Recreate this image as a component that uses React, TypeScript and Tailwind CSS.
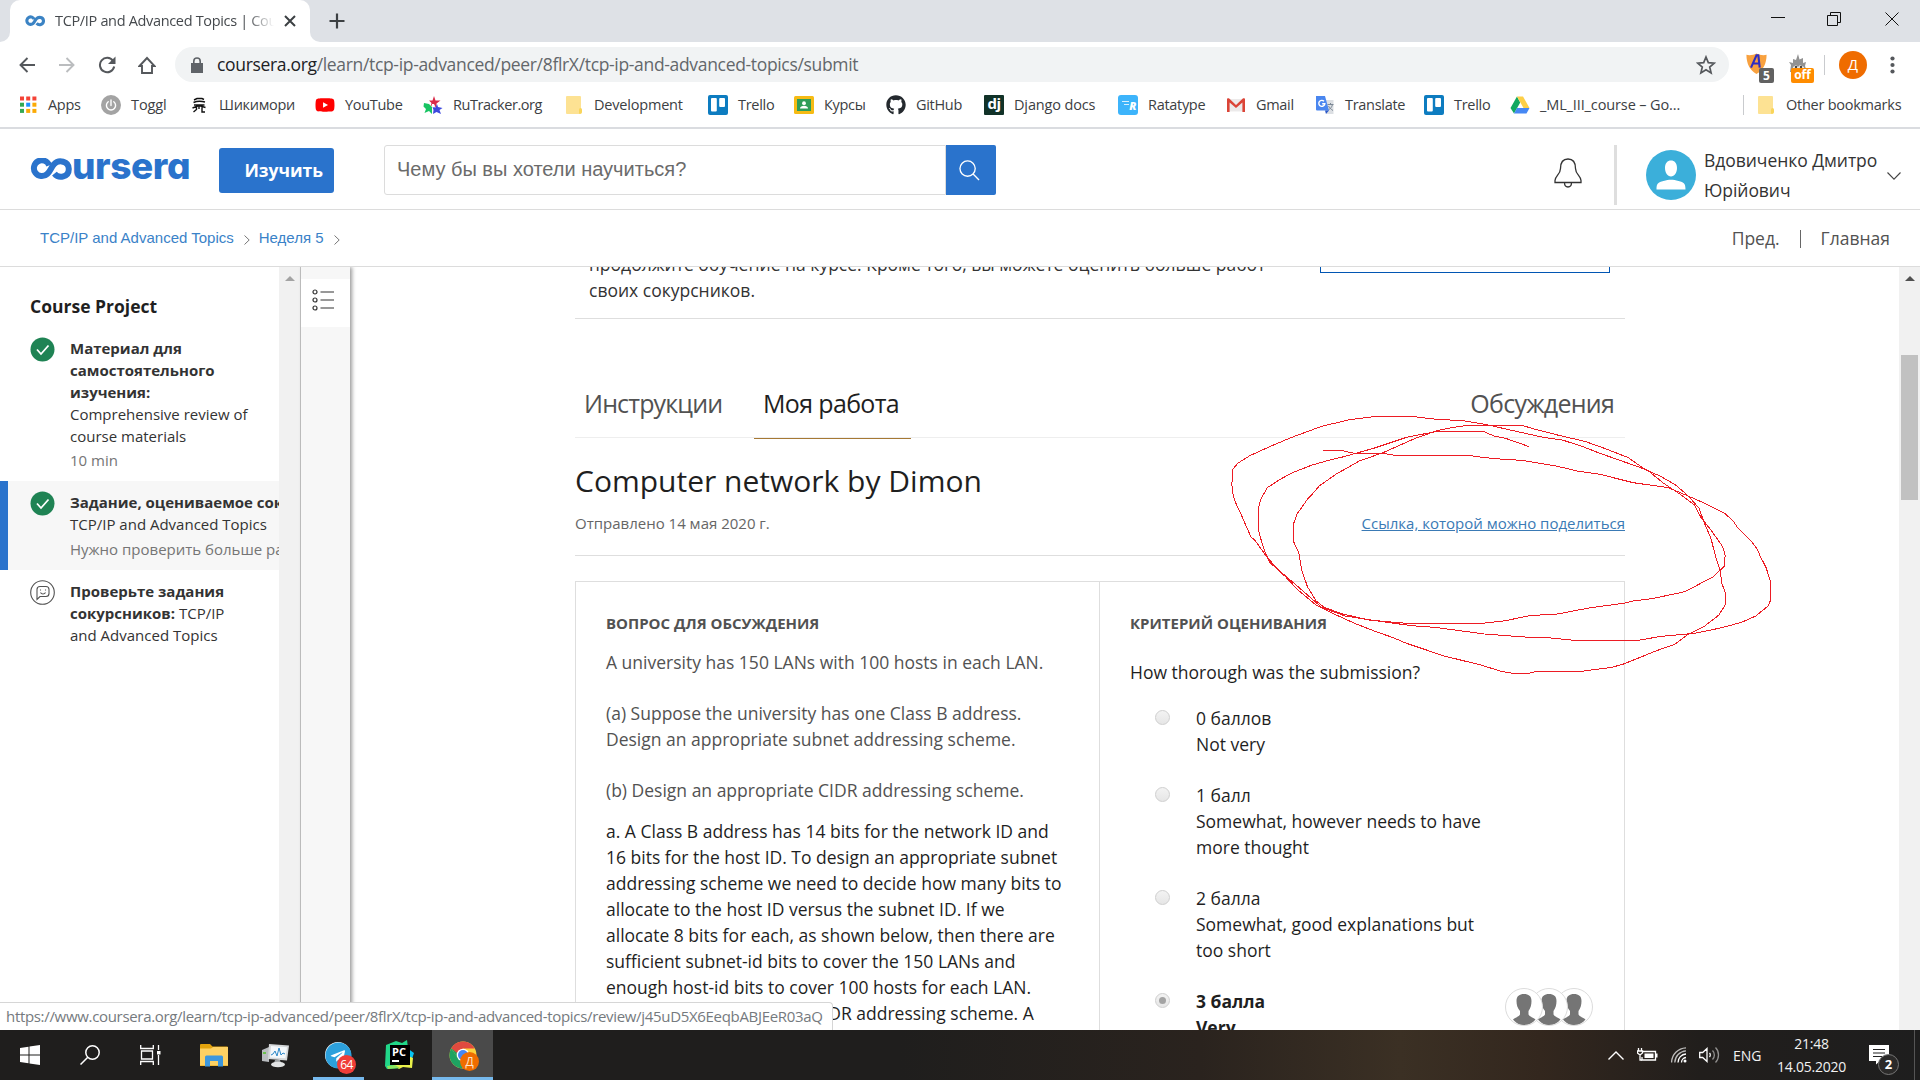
import type { ReactNode } from 'react'
import { FaGithub, FaTelegram, FaYoutube } from 'react-icons/fa'

/* ---------- icons ---------- */

function CourseraMark({ className, width }: { className: string; width: number }) {
  return (
    <svg viewBox="0 0 42 22" className={className} fill="none" stroke="currentColor" strokeWidth={width}>
      <path d="M19.2 7.4A7.9 7.9 0 1 0 17.2 16C20.4 13 21.2 9.4 24 6.2C28.6 1.2 38.8 3 38.8 11C38.8 19 29 21.2 24.4 15.6" />
    </svg>
  )
}

function AppsIcon() {
  const colors = ['#f44336', '#f44336', '#f44336', '#34a853', '#1e90ff', '#fbaa05', '#34a853', '#fbaa05', '#fbaa05']
  return (
    <svg viewBox="0 0 20 20" className="size-5">
      {colors.map((c, i) => (
        <rect key={i} x={2 + (i % 3) * 6.2} y={1.5 + Math.floor(i / 3) * 6.2} width="4" height="4" fill={c} />
      ))}
    </svg>
  )
}

function TogglIcon() {
  return (
    <svg viewBox="0 0 20 20" className="size-5" fill="none">
      <circle cx="10" cy="10" r="10" fill="#a3a3a3" />
      <path d="M10 5v5.5M7.2 6.8a4.6 4.6 0 1 0 5.6 0" stroke="#fff" strokeWidth="1.4" strokeLinecap="round" />
    </svg>
  )
}

function ShikimoriIcon() {
  return (
    <svg viewBox="0 0 20 20" className="size-5" fill="none" stroke="#111" strokeWidth="1.4">
      <path d="M5 5L8 3.500h5l2 1M4.500 7.500C8 6 12 6 16 7M5 10h10.500M3.500 13l6.500-2.500 6.500 2M7.500 12v2.500l-3 2.500M13 12v5h3M10 10v4" />
    </svg>
  )
}

function RuTrackerIcon() {
  return (
    <svg viewBox="0 0 20 20" className="size-5" strokeLinejoin="round" strokeWidth="2">
      <path d="M11 1l1.500 4.500h5l-4 3 0 4-3-2-3 1 1-3.500-2.500-2.500h3.500z" fill="#d92b4a" />
      <path d="M1 8l5 1 3 3 0 7-3-3-4.500 2 1.500-4-2.500-2.500z" fill="#19c463" />
      <path d="M14 9l1 3 4.500 1-3 2 1.500 4-4.500-2-3.500 2 .500-4-1-3 3 .500z" fill="#3d49de" />
      <path d="M9 9l2 0 1 2-2 1.500-1.500-1.500z" fill="#fff" />
    </svg>
  )
}

function FolderIcon() {
  return (
    <svg viewBox="0 0 20 20" className="size-5">
      <path d="M3 1h13a1 1 0 0 1 1 1v12h.5v4a1 1 0 0 1-1 1H3a1 1 0 0 1-1-1V2a1 1 0 0 1 1-1z" fill="#fde293" />
      <path d="M15 14.500a1.500 1.500 0 0 1 3 0V17a2 2 0 0 1-3 1.500z" fill="#f9d55b" />
    </svg>
  )
}

function TrelloIcon() {
  return (
    <svg viewBox="0 0 20 20" className="size-5">
      <rect width="20" height="20" rx="2" fill="#0d7cc0" />
      <rect x="3" y="3" width="5.800" height="13.500" rx="1" fill="#fff" />
      <rect x="11.200" y="3" width="5.800" height="9" rx="1" fill="#fff" />
    </svg>
  )
}

function ClassroomIcon() {
  return (
    <svg viewBox="0 0 20 20" className="size-5">
      <rect y="1" width="20" height="18" rx="1.500" fill="#f6bb14" />
      <rect x="3" y="4" width="14" height="12" fill="#2f9d58" />
      <circle cx="10" cy="8.200" r="1.900" fill="#fff" />
      <path d="M6 13.500c0-3.600 8-3.600 8 0z" fill="#fff" />
    </svg>
  )
}

function DjangoIcon() {
  return (
    <span className="flex size-5 items-center justify-center rounded-[1px] bg-[#113228] pb-[3px] text-[15px] leading-none font-bold tracking-[-0.5px] text-white">
      dj
    </span>
  )
}

function RatatypeIcon() {
  return (
    <span className="flex size-5 items-center justify-end rounded-[3px] bg-[#3db4fb] pr-[2px] text-[11px] leading-none font-extrabold text-white italic">
      <span className="mb-1 flex flex-col items-end gap-[2px]">
        <i className="h-px w-[7px] bg-white/80" />
        <i className="h-px w-[5px] bg-white/80" />
      </span>
      R
    </span>
  )
}

function GmailIcon() {
  return (
    <svg viewBox="0 0 20 20" className="size-5">
      <path d="M2 4h16v12.500H2z" fill="#eceaea" />
      <path d="M1 4.200C1 3.200 2.400 2.800 3.200 3.600L10 10l6.800-6.400C17.600 2.800 19 3.200 19 4.200V17h-2.600V7.500L10 13 3.600 7.500V17H1z" fill="#db4437" />
    </svg>
  )
}

function TranslateIcon() {
  return (
    <svg viewBox="0 0 20 20" className="size-5">
      <path d="M8 5h10.500v14H12z" fill="#dcdfe3" />
      <path d="M12.500 9.500h6M15.500 8v1.500M17.500 9.500c-.5 2.500-2.500 4.500-4 5.500M13.500 11c1 2 3 3.500 4.500 4.500" stroke="#7b8794" fill="none" />
      <path d="M1 1h9l4 14.500H2a1 1 0 0 1-1-1z" fill="#4a86ef" />
      <path d="M10 15.500h4l-3 3.500z" fill="#2a56c6" />
      <path d="M9 6.300A3 3 0 1 0 9.800 8.800H7.200" stroke="#fff" strokeWidth="1.400" fill="none" />
    </svg>
  )
}

function DriveIcon() {
  return (
    <svg viewBox="0 0 20 20" className="size-5">
      <path d="M7 1.500L.500 13 4 18.500 10.200 7.500z" fill="#11a860" />
      <path d="M7 1.500h6L19.500 13h-6z" fill="#fdcf48" />
      <path d="M7 13h12.500L16.500 18.500H4z" fill="#4688f4" />
    </svg>
  )
}

function PersonBust() {
  return (
    <span className="flex size-[38px] items-end justify-center overflow-hidden rounded-full border border-[#dcdcdc] bg-white">
      <svg viewBox="0 0 36 36" className="size-9" fill="#757575">
        <path d="M10.500 12C10.500 7 13.500 5 18 5s7.500 2 7.500 7c0 4-1 7-3 10v3.500c1.500 2.500 5 3 7 5C27 34 23 36 18 36S10 34 7 30.500c2-2 5.500-2.500 7-5V22c-2.500-3-3.500-6-3.500-10z" />
      </svg>
    </span>
  )
}

/* ---------- browser chrome ---------- */

function TabStrip() {
  return (
    <div className="flex h-[42px] shrink-0 items-stretch justify-between bg-[#dee1e6]">
      <div className="flex items-stretch">
        <div className="w-[10px] bg-white">
          <div className="size-full rounded-br-[10px] bg-[#dee1e6]" />
        </div>
        <div className="flex w-[300px] items-center rounded-t-[10px] bg-white pl-[15px]">
          <CourseraMark className="h-[12px] w-[20px] text-[#3b83c4]" width={6.5} />
          <div className="ml-[10px] w-[220px] overflow-hidden text-[14.5px] tracking-[-0.33px] whitespace-nowrap text-[#45494d] [mask-image:linear-gradient(to_right,black_192px,transparent_219px)]">
            TCP/IP and Advanced Topics | Cour
          </div>
          <svg viewBox="0 0 12 12" className="ml-[9px] size-3" stroke="#3c4043" strokeWidth="2">
            <path d="M1 1l10 10M11 1L1 11" />
          </svg>
        </div>
        <div className="w-[10px] bg-white">
          <div className="size-full rounded-bl-[10px] bg-[#dee1e6]" />
        </div>
        <svg viewBox="0 0 16 16" className="ml-[9px] size-4 self-center" stroke="#3c4043" strokeWidth="2.2">
          <path d="M8 .5v15M.5 8h15" />
        </svg>
      </div>
      <div className="flex items-start pt-[12px]">
        <svg viewBox="0 0 14 14" className="mr-[42px] size-[14px]" stroke="#111">
          <path d="M0 5.500h14" />
        </svg>
        <svg viewBox="0 0 14 14" className="mr-[44px] size-[14px]" fill="none" stroke="#111">
          <path d="M.5 3.500h10v10h-10zM3.500 3.500v-3h10v10h-3" />
        </svg>
        <svg viewBox="0 0 14 14" className="mr-[21px] size-[14px]" stroke="#111">
          <path d="M.5 .5l13 13M13.500 .5l-13 13" />
        </svg>
      </div>
    </div>
  )
}

function Toolbar() {
  return (
    <div className="flex h-[45px] shrink-0 items-center bg-white">
      <svg viewBox="0 0 16 16" className="ml-[19px] size-4" fill="none" stroke="#55585c" strokeWidth="1.900">
        <path d="M16 8H1.500M8.500 1L1.500 8l7 7" />
      </svg>
      <svg viewBox="0 0 16 16" className="ml-[24px] size-4" fill="none" stroke="#bbbdbf" strokeWidth="1.900">
        <path d="M0 8h14.500M7.500 1l7 7-7 7" />
      </svg>
      <svg viewBox="0 0 18 18" className="ml-[23px] size-[18px]" fill="none" stroke="#55585c" strokeWidth="2">
        <path d="M15 4.800A7.200 7.200 0 1 0 16.200 10.500" />
        <path d="M17.500 .5v7.500H10z" fill="#55585c" stroke="none" />
      </svg>
      <svg viewBox="0 0 18 18" className="ml-[22px] size-[18px]" fill="none" stroke="#55585c" strokeWidth="1.900">
        <path d="M1.500 10L9 2l7.500 8H14v7H4v-7z" />
      </svg>
      <div className="ml-[19px] flex h-[35px] w-[1554px] items-center rounded-full bg-[#f1f3f4] pr-[13px] pl-[16px]">
        <svg viewBox="0 0 12 16" className="h-4 w-[12px]">
          <path d="M0 6h12v10H0z" fill="#5f6368" />
          <path d="M2.800 6.500V4.200a3.200 3.200 0 0 1 6.400 0v2.300" fill="none" stroke="#5f6368" strokeWidth="1.600" />
        </svg>
        <div className="ml-[14px] flex-1 text-[17.5px] tracking-[-0.33px] text-[#63676b]">
          <span className="text-[#202124]">coursera.org</span>/learn/tcp-ip-advanced/peer/8flrX/tcp-ip-and-advanced-topics/submit
        </div>
        <svg viewBox="0 0 20 20" className="size-5" fill="none" stroke="#55585c" strokeWidth="1.700">
          <path d="M10 2l2.300 5.600 6 .5-4.600 3.900 1.400 5.900L10 14.700 4.900 17.900l1.400-5.900L1.700 8.100l6-.5z" />
        </svg>
      </div>
      <div className="relative ml-[17px] h-[28px] w-[28px]">
        <svg viewBox="0 0 22 24" className="mt-[2px] h-[22px] w-[21px]">
          <path d="M0 2c4 1 8 0 11-1.500C14 2 18 3 22 2c0 10-4 17-11 21C4 19 0 12 0 2z" fill="#f8a13f" />
          <path d="M5 16L11 2.500h2L14.500 16M7.500 11.500h7" fill="none" stroke="#2c2cc4" strokeWidth="2.300" />
        </svg>
        <span className="absolute right-0 bottom-[-4px] h-[15px] w-[15px] rounded-[2px] bg-[#616161] text-center text-[12px] leading-[15px] font-bold text-white">5</span>
      </div>
      <div className="relative ml-[14px] h-[28px] w-[26px]">
        <svg viewBox="0 0 20 20" className="mt-[2px] size-5">
          <path d="M2 19L3 12 1 9l4 1L5 6l3 1 2-6 1.500 5.500L15 5l0 5 3-1-1 4L19 19z" fill="#929292" />
          <path d="M5 14l3-2 2 2 2-2 4 2v3H5z" fill="#e8e8e8" />
          <circle cx="8" cy="14" r="1.200" fill="#444" />
          <circle cx="13" cy="14" r="1.200" fill="#444" />
        </svg>
        <span className="absolute right-0 bottom-[-4px] h-[15px] w-[23px] rounded-[2px] bg-[#ff8c00] text-center text-[12px] leading-[14px] font-bold text-white">off</span>
      </div>
      <div className="ml-[10px] h-[20px] w-px bg-[#c9cbce]" />
      <div className="ml-[14px] flex size-[28px] items-center justify-center rounded-full bg-[#ef6c00] pb-px text-[15px] text-white">Д</div>
      <svg viewBox="0 0 5 20" className="ml-[23px] h-5 w-[5px]" fill="#55585c">
        <circle cx="2.500" cy="3.500" r="2.100" />
        <circle cx="2.500" cy="10" r="2.100" />
        <circle cx="2.500" cy="16.500" r="2.100" />
      </svg>
    </div>
  )
}

const bookmarks: { label: string; icon: ReactNode; width: string }[] = [
  { label: 'Apps', icon: <AppsIcon />, width: 'w-[83px]' },
  { label: 'Toggl', icon: <TogglIcon />, width: 'w-[88px] tracking-[-0.1px]' },
  { label: 'Шикимори', icon: <ShikimoriIcon />, width: 'w-[126px]' },
  { label: 'YouTube', icon: <FaYoutube className="size-5 text-[#f00]" />, width: 'w-[108px]' },
  { label: 'RuTracker.org', icon: <RuTrackerIcon />, width: 'w-[141px] tracking-[-0.45px]' },
  { label: 'Development', icon: <FolderIcon />, width: 'w-[144px] tracking-[-0.2px]' },
  { label: 'Trello', icon: <TrelloIcon />, width: 'w-[86px]' },
  { label: 'Курсы', icon: <ClassroomIcon />, width: 'w-[92px]' },
  { label: 'GitHub', icon: <FaGithub className="size-5 text-[#24292e]" />, width: 'w-[98px]' },
  { label: 'Django docs', icon: <DjangoIcon />, width: 'w-[134px] tracking-[-0.15px]' },
  { label: 'Ratatype', icon: <RatatypeIcon />, width: 'w-[108px]' },
  { label: 'Gmail', icon: <GmailIcon />, width: 'w-[89px]' },
  { label: 'Translate', icon: <TranslateIcon />, width: 'w-[109px]' },
  { label: 'Trello', icon: <TrelloIcon />, width: 'w-[86px]' },
  { label: '_ML_III_course – Go...', icon: <DriveIcon />, width: 'w-[233px] tracking-[-0.12px]' },
]

function BookmarksBar() {
  return (
    <div className="flex h-[42px] shrink-0 items-center border-b-2 border-[#dadce0] bg-white pb-[4px] pl-[18px] text-[14.5px] tracking-[-0.3px] text-[#3c4043]">
      {bookmarks.map((b, i) => (
        <div key={i} className={`flex shrink-0 items-center gap-[10px] whitespace-nowrap ${b.width}`}>
          {b.icon}
          {b.label}
        </div>
      ))}
      <div className="h-5 w-px bg-[#c9cbce]" />
      <div className="ml-[12px] flex items-center gap-[10px] tracking-[-0.25px] whitespace-nowrap">
        <FolderIcon />
        Other bookmarks
      </div>
    </div>
  )
}

/* ---------- site header ---------- */

function SiteHeader() {
  return (
    <header className="flex h-[81px] shrink-0 items-start border-b border-[#dcdcdc] bg-white">
      <div className="mt-[29px] ml-[30px] flex h-[22px] w-[160px] items-center text-[#2a73cc]">
        <CourseraMark className="h-[22px] w-[42px] shrink-0" width={6} />
        <span className="pb-[7px] font-['Inter',sans-serif] text-[37px] leading-[22px] font-extrabold tracking-[-0.4px] [font-feature-settings:'cv11']">ursera</span>
      </div>
      <button className="mt-[19px] ml-[29px] h-[45px] w-[115px] rounded-[3px] bg-[#2a73cc] pr-[11px] text-right text-[17.5px] font-bold text-white">
        Изучить
      </button>
      <div className="mt-[16px] ml-[50px] flex h-[50px] w-[612px]">
        <div className="flex-1 rounded-l-[3px] border border-[#dcdcdc] pl-[12px] font-['Liberation_Sans',sans-serif] text-[20px] leading-[46px] text-[#6b6b6b]">
          Чему бы вы хотели научиться?
        </div>
        <div className="flex w-[50px] items-center justify-center rounded-r-[2px] bg-[#2a73cc]">
          <svg viewBox="0 0 22 22" className="mr-[4px] size-[21px]" fill="none" stroke="#fff" strokeWidth="1.400">
            <circle cx="9" cy="9" r="8" />
            <path d="M14.500 14.500L21 21" />
          </svg>
        </div>
      </div>
      <svg viewBox="0 0 28 30" className="mt-[29px] ml-auto h-[30px] w-[28px]" fill="none" stroke="#333" strokeWidth="1.300">
        <path d="M6.500 10.500C6.500 4.500 9 1 14 1s7.500 3.500 7.500 9.500c0 6 5.500 7.500 5.500 12v2H1v-2c0-4.500 5.500-6 5.500-12zM10.500 24.500c0 6 7 6 7 0" />
      </svg>
      <div className="mt-[16px] ml-[32px] h-[60px] w-[3px] bg-[#dedede]" />
      <div className="mt-[21px] ml-[29px] size-[50px] overflow-hidden rounded-full bg-[#3bafda]">
        <svg viewBox="0 0 50 50" fill="#fff">
          <path d="M19 18c0-5 2.500-7.500 6-7.500s6 2.500 6 7.500c0 4.500-2.500 8.500-6 8.500s-6-4-6-8.500zM10.500 39.500c0-6 1.500-7 7-8.500 5.500-1.800 9.500-1.800 15 0 5.500 1.500 7 2.500 7 8.500z" />
        </svg>
      </div>
      <div className="mt-[16px] ml-[8px] w-[183px] text-[17.5px] leading-[30px] tracking-[-0.05px] text-[#333]">
        Вдовиченко Дмитро
        <br />
        Юрійович
      </div>
      <svg viewBox="0 0 14 8" className="mt-[43px] mr-[19px] h-[8px] w-[14px]" fill="none" stroke="#444" strokeWidth="1.100">
        <path d="M.5 .5L7 7.200 13.500 .5" />
      </svg>
    </header>
  )
}

function Caret({ className }: { className: string }) {
  return (
    <svg viewBox="0 0 6 10" className={`h-[10px] w-[6px] ${className}`} fill="none" stroke="#777">
      <path d="M.5 .5L5.200 5 .5 9.500" />
    </svg>
  )
}

function BreadcrumbBar() {
  return (
    <nav className="flex h-[57px] shrink-0 items-center border-b border-[#dcdcdc] bg-white pl-[40px]">
      <div className="flex items-center font-['Liberation_Sans',sans-serif] text-[15px] text-[#3a82c8]">
        TCP/IP and Advanced Topics
        <Caret className="mt-[3px] mr-[9px] ml-[10px]" />
        Неделя 5
        <Caret className="mt-[3px] ml-[10px]" />
      </div>
      <div className="mr-[30px] ml-auto flex items-center pt-px text-[17.5px] text-[#525252]">
        Пред.
        <div className="mr-[20px] ml-[20px] h-[18px] w-px bg-[#666]" />
        Главная
      </div>
    </nav>
  )
}

/* ---------- sidebar ---------- */

function CheckBadge() {
  return (
    <svg viewBox="0 0 25 25" className="size-[25px] shrink-0">
      <circle cx="12.500" cy="12.500" r="12" fill="#1f8354" />
      <path d="M7 12.500l4 4.500 7.500-8.500" fill="none" stroke="#fff" strokeWidth="1.800" />
    </svg>
  )
}

function PeerBadge() {
  return (
    <svg viewBox="0 0 25 25" className="size-[25px] shrink-0" fill="none" stroke="#525252" strokeWidth="1.100">
      <circle cx="12.500" cy="12.500" r="11.800" />
      <path d="M7 19.500V9.500a3 3 0 0 1 3-3h6a3 3 0 0 1 3 3v4a3 3 0 0 1-3 3h-6zM10.500 12.500c1 2 4 2 5 0M10.500 9.500v1M15.500 9.500v1" />
    </svg>
  )
}

function Sidebar() {
  return (
    <aside className="flex w-[350px] shrink-0">
      <div className="w-[279px] overflow-hidden bg-white text-[15px] leading-[22px] whitespace-nowrap text-[#333]">
        <h2 className="mt-[26px] mb-[18px] pl-[30px] text-[17.5px] leading-[26px] font-bold text-[#1f1f1f]">Course Project</h2>
        <div className="flex gap-[15px] pb-[10px] pl-[30px]">
          <CheckBadge />
          <div>
            <b>
              Материал для
              <br />
              самостоятельного
              <br />
              изучения:
            </b>
            <br />
            Comprehensive review of
            <br />
            course materials
            <div className="mt-[2px] text-[#757575]">10 min</div>
          </div>
        </div>
        <div className="flex gap-[15px] border-l-[8px] border-[#2a73cc] bg-[#f7f7f7] py-[10px] pl-[22px]">
          <CheckBadge />
          <div>
            <b>Задание, оцениваемое сокурсниками:</b>
            <br />
            TCP/IP and Advanced Topics
            <div className="mt-[3px] text-[#757575]">Нужно проверить больше работ</div>
          </div>
        </div>
        <div className="flex gap-[15px] py-[10px] pl-[30px]">
          <PeerBadge />
          <div>
            <b>Проверьте задания</b>
            <br />
            <b>сокурсников:</b> TCP/IP
            <br />
            and Advanced Topics
          </div>
        </div>
      </div>
      <div className="flex w-[22px] justify-center border-r border-[#c4c4c4] bg-[#f1f1f1] pt-[9px]">
        <div className="size-0 border-x-[5px] border-b-[5px] border-x-transparent border-b-[#a3a3a3]" />
      </div>
      <div className="z-10 w-[49px] bg-[#f7f7f7] pt-[12px] shadow-[2px_0_4px_rgba(0,0,0,0.4)]">
        <div className="flex h-[48px] items-center justify-center bg-white">
          <svg viewBox="0 0 22 22" className="mr-[5px] mb-[6px] size-[22px]" fill="none" stroke="#333" strokeWidth="1.200">
            <circle cx="3" cy="3" r="2" />
            <circle cx="3" cy="11" r="2" />
            <circle cx="3" cy="19" r="2" />
            <path d="M8.500 3H22M8.500 11H22M8.500 19H22" />
          </svg>
        </div>
      </div>
    </aside>
  )
}

/* ---------- submission ---------- */

const options: { points: string; lines: string[]; checked?: boolean }[] = [
  { points: '0 баллов', lines: ['Not very'] },
  { points: '1 балл', lines: ['Somewhat, however needs to have', 'more thought'] },
  { points: '2 балла', lines: ['Somewhat, good explanations but', 'too short'] },
  { points: '3 балла', lines: ['Very'], checked: true },
]

const answer = [
  'a. A Class B address has 14 bits for the network ID and',
  '16 bits for the host ID. To design an appropriate subnet',
  'addressing scheme we need to decide how many bits to',
  'allocate to the host ID versus the subnet ID. If we',
  'allocate 8 bits for each, as shown below, then there are',
  'sufficient subnet-id bits to cover the 150 LANs and',
  'enough host-id bits to cover 100 hosts for each LAN.',
  'b. Design an appropriate CIDR addressing scheme. A',
]

function Submission() {
  return (
    <main className="ml-[225px] w-[1050px] shrink-0 text-[17.5px] leading-[26px] text-[#1f1f1f]">
      <div className="mt-[-16px] flex h-[68px] justify-between border-b border-[#dedede] whitespace-nowrap">
        <div className="pl-[14px] text-[#333]">
          продолжите обучение на курсе. Кроме того, вы можете оценить больше работ
          <br />
          своих сокурсников.
        </div>
        <div className="mr-[15px] h-[22px] w-[290px] border border-[#0156b3]" />
      </div>
      <div className="mt-[60px] flex h-[59px] items-end justify-between border-b border-[#eee] text-[25px] leading-[34px] tracking-[-0.85px] text-[#525252]">
        <div className="flex">
          <div className="h-[51px] w-[179px] pl-[9px]">Инструкции</div>
          <div className="-mb-[2px] h-[53px] w-[157px] border-b border-[#a67834] pl-[9px] tracking-[-0.65px] text-[#1f1f1f]">Моя работа</div>
        </div>
        <div className="h-[51px] pr-[11px] tracking-[-0.75px]">Обсуждения</div>
      </div>
      <h1 className="mt-[23px] text-[30px] leading-[40px]">Computer network by Dimon</h1>
      <div className="mt-[11px] flex h-[44px] justify-between border-b border-[#dedede] text-[15px] leading-[22px] text-[#666]">
        <span>Отправлено 14 мая 2020 г.</span>
        <a className="text-[#3a7ab5] underline">Ссылка, которой можно поделиться</a>
      </div>
      <div className="mt-[25px] flex border border-b-0 border-[#dedede] whitespace-nowrap">
        <section className="w-[524px] border-r border-[#dedede] pt-[30px] pl-[30px]">
          <h3 className="text-[15px] leading-[22px] font-bold text-[#525252]">ВОПРОС ДЛЯ ОБСУЖДЕНИЯ</h3>
          <div className="mt-[15px] text-[#525252]">
            <p>A university has 150 LANs with 100 hosts in each LAN.</p>
            <p className="mt-[25px]">
              (a) Suppose the university has one Class B address.
              <br />
              Design an appropriate subnet addressing scheme.
            </p>
            <p className="mt-[25px]">(b) Design an appropriate CIDR addressing scheme.</p>
          </div>
          <div className="mt-[15px]">
            {answer.map((line) => (
              <div key={line}>{line}</div>
            ))}
          </div>
        </section>
        <section className="flex-1 pt-[30px] pl-[30px]">
          <h3 className="text-[15px] leading-[22px] font-bold text-[#525252]">КРИТЕРИЙ ОЦЕНИВАНИЯ</h3>
          <p className="mt-[25px] mb-[20px]">How thorough was the submission?</p>
          {options.map((o) => (
            <div key={o.points} className={o.checked ? 'mb-[25px] flex font-bold' : 'mb-[25px] flex'}>
              <span className="mt-[5px] mr-[26px] ml-[25px] flex size-[15px] items-center justify-center rounded-full border border-[#cfcfcf] bg-linear-to-b from-[#f3f3f3] to-[#e6e6e6]">
                {o.checked && <i className="size-[7px] rounded-full bg-[#a3a3a3]" />}
              </span>
              <div className="flex-1">
                {o.points}
                {o.lines.map((l) => (
                  <div key={l}>{l}</div>
                ))}
              </div>
              {o.checked && (
                <div className="mr-[31px] flex -space-x-[13px]">
                  <span className="z-20"><PersonBust /></span>
                  <span className="z-10"><PersonBust /></span>
                  <PersonBust />
                </div>
              )}
            </div>
          ))}
        </section>
      </div>
    </main>
  )
}

function PageScrollbar() {
  return (
    <div className="ml-auto flex w-[21px] shrink-0 flex-col items-center bg-[#f1f1f1] pt-[9px]">
      <div className="size-0 border-x-[5px] border-b-[5px] border-x-transparent border-b-[#505050]" />
      <div className="mt-[74px] h-[145px] w-[17px] bg-[#c1c1c1]" />
    </div>
  )
}

/* Freehand pen mark circling the shareable link */
function PenMark() {
  return (
    <svg className="pointer-events-none absolute top-[360px] left-[1180px] z-10 h-[330px] w-[740px]" viewBox="0 0 1568 990" preserveAspectRatio="none" fill="none" stroke="#ed1c24" strokeWidth="1" shapeRendering="crispEdges">
      <polyline
        vectorEffect="non-scaling-stroke"
        points="302,271 340,271 370,280 430,280 455,286 610,286 640,292 685,298 725,301 800,319 845,334 890,343 960,368 1035,383 1075,407 1115,432 1155,461 1172,483 1182,504 1210,543 1222,565 1230,590 1242,623 1251,665 1251,722 1246,738 1220,768 1190,787 1145,804 1090,820 1020,829 970,841 835,841 780,833 730,831 645,822 540,802 490,797 455,790 405,780 350,768 300,742 250,680 205,625 180,583 160,543 150,530 130,465 120,435 113,410 110,375 111,330 122,310 148,287 190,260 235,233 300,199 360,179 415,169 495,170 545,178 600,182 650,194 700,210 770,232 810,240 850,258 890,280 930,300 990,330 1025,370 1060,403 1090,435 1105,475 1125,510 1150,560 1155,585 1154,618 1130,650 1070,695 1000,716 960,723 940,730 870,743 800,762 740,767 690,782 640,790 480,790 400,780 345,762 305,742 288,722 270,680 258,630 252,580 240,543 241,490 248,462 270,418 285,395 295,378 330,343 380,303 430,278 500,234 545,212 575,203 610,196 725,196 750,207 800,225 860,245 905,268 950,293 985,328 1020,350 1050,375 1075,405 1100,445 1110,485 1125,535 1135,590 1145,635 1148,670 1156,700 1155,735 1142,765 1110,800 1075,825 1048,853 1010,872 940,912 915,922 850,934 755,934 740,940 705,940 680,934 640,916 560,888 480,850 450,832 415,815 370,790 320,758 288,735 250,690 240,675 222,648 190,607 180,575 172,540 166,510 166,445 172,415 185,383 210,360 235,340 280,315 310,303 350,289 410,265 480,232 545,214 643,214 665,228 690,235 740,260"
      />
    </svg>
  )
}

/* ---------- taskbar ---------- */

function Tile({ children, className = '' }: { children: ReactNode; className?: string }) {
  return <div className={`flex h-full w-[62px] items-center justify-center ${className}`}>{children}</div>
}

function Taskbar() {
  return (
    <footer className="flex h-[50px] shrink-0 items-center bg-[linear-gradient(to_right,#1f1e1d_0,#1f1e1d_900px,#2a231e_1200px,#3b3024_1400px,#33271e_1540px,#211e1c_1700px,#1e1e1e_1920px)] text-[#f2f2f2]">
      <Tile className="!w-[60px]">
        <svg viewBox="0 0 20 20" className="size-5" fill="#fff">
          <path d="M0 3l8.500-1.200v7.700H0zM9.500 1.600L20 0v9.500H9.500zM0 10.500h8.500v7.700L0 17zM9.500 10.500H20V20L9.500 18.400z" />
        </svg>
      </Tile>
      <Tile className="!w-[60px]">
        <svg viewBox="0 0 20 20" className="size-5" fill="none" stroke="#fff" strokeWidth="1.500">
          <circle cx="12.500" cy="7.500" r="6.700" />
          <path d="M7.800 12.200L.5 19.500" />
        </svg>
      </Tile>
      <Tile className="pr-[2px]">
        <svg viewBox="0 0 21 20" className="h-5 w-[21px]" fill="none" stroke="#fff" strokeWidth="1.300">
          <path d="M.7 0v3.500h12.600V0M1.500 6h11v8h-11zM.7 20v-3.500h12.600V20M18.500 0v5M18.500 10v10" />
          <path d="M17 6h3.500v3.500H17z" fill="#fff" stroke="none" />
        </svg>
      </Tile>
      <Tile className="pl-[2px]">
        <svg viewBox="0 0 28 24" className="h-6 w-7">
          <path d="M0 2a1 1 0 0 1 1-1h9l2.500 2.500H27a1 1 0 0 1 1 1V23H0z" fill="#e2a20c" />
          <path d="M0 5.500h11l2-1.500h15v18.500H0z" fill="#fdd163" />
          <path d="M5 23.500V14a1.500 1.500 0 0 1 1.500-1.500h15A1.500 1.500 0 0 1 23 14v9.500h-5V18h-8v5.500z" fill="#3c97dd" />
        </svg>
      </Tile>
      <Tile>
        <svg viewBox="0 0 27 26" className="h-[26px] w-[27px]">
          <path d="M0 8l7-3v15l-7-1z" fill="#b8bcbf" />
          <path d="M1 10h3v2H1z" fill="#6bc04b" />
          <path d="M7 2l20 1.500-2 15L6 17z" fill="#d5d8da" />
          <path d="M9 4l16 1.300-1.600 11L8 15.500z" fill="#f4f8fb" />
          <path d="M9 13l2-1 2-3 2 5 2-8 2 7 2-2 2 1" fill="none" stroke="#2c88c9" />
          <path d="M13 18h5l1 3h-7z" fill="#9fa3a6" />
          <ellipse cx="16" cy="22.500" rx="7" ry="2.800" fill="#e2e4e5" />
        </svg>
      </Tile>
      <Tile className="relative pl-[2px]">
        <span className="size-[26px] rounded-full bg-white">
          <FaTelegram className="size-[27px] text-[#2ca0dc]" />
        </span>
        <span className="absolute top-[25px] left-[31px] flex size-[19px] items-center justify-center rounded-full bg-[#f03d38] text-[12px] tracking-[-0.5px] text-white">64</span>
        <i className="absolute bottom-0 left-[7px] h-[3px] w-[51px] bg-[#76b9ed]" />
      </Tile>
      <Tile className="pl-[2px]">
        <span className="relative flex size-[30px] items-center justify-center">
          <svg viewBox="0 0 30 30" className="absolute inset-0 size-[30px]">
            <path d="M1 5l10-4 6 2 5-3 1 8-8 20-13 1-2-3z" fill="#21d789" />
            <path d="M22 8l7 5-2 6-6-1z" fill="#07c3f2" />
            <path d="M8 25l15-9 5 2-1 10-9-1-4 2z" fill="#e8f04a" />
            <path d="M2 26l8-1 5 3-12 1z" fill="#8be45f" />
          </svg>
          <span className="relative flex h-5 w-5 flex-col bg-black pl-[2px] text-[11px] leading-[13px] font-bold text-white">
            PC
            <i className="mt-[2px] h-[1.5px] w-[7px] bg-white" />
          </span>
        </span>
      </Tile>
      <Tile className="relative ml-[2px] !w-[61px] bg-[#4a4a4a]">
        <svg viewBox="0 0 28 28" className="size-7">
          <circle cx="14" cy="14" r="13.500" fill="#fdd33c" />
          <path d="M2.300 7.200A13.500 13.500 0 0 0 13 27.500L19 17l-5 2-6-3z" fill="#1ea362" />
          <path d="M2.300 7.200L8.500 17 14 8z" fill="#1ea362" />
          <path d="M2.300 7.200A13.500 13.500 0 0 1 25.700 7.500H14L8 12z" fill="#e04a3f" />
          <circle cx="14" cy="14" r="6.300" fill="#fff" />
          <circle cx="14" cy="14" r="5" fill="#4688f4" />
        </svg>
        <span className="absolute top-[22px] left-[28px] flex size-[19px] items-center justify-center rounded-full bg-[#ef6c00] text-[12px] text-[#ffe3cc]">Д</span>
        <i className="absolute bottom-0 left-0 h-[3px] w-full bg-[#76b9ed]" />
      </Tile>
      <div className="ml-auto flex h-full items-center text-[14px]">
        <svg viewBox="0 0 16 9" className="h-[9px] w-4" fill="none" stroke="#fff" strokeWidth="1.400">
          <path d="M.5 8.500L8 1l7.500 7.500" />
        </svg>
        <svg viewBox="0 0 21 14" className="ml-[13px] h-[14px] w-[21px]" fill="none" stroke="#fff" strokeWidth="1.300">
          <path d="M5 3.500h13.500v8.500H5V9" />
          <path d="M7.500 5.500h9v4.500h-9zM19 5.500h1.500v4H19z" fill="#fff" stroke="none" />
          <path d="M1.500 0v2.500M4.500 0v2.500M.5 3h5v2L3 7 .5 5zM3 7v5h2" />
        </svg>
        <svg viewBox="0 0 16 16" className="ml-[13px] size-4" fill="none" stroke="#fff" strokeWidth="1.300">
          <path d="M10.500 15.500a5 5 0 0 1 4.500-5M7 15.500a8.500 8.500 0 0 1 8-8.500" />
          <path d="M3.800 15.500A12 12 0 0 1 15 3.800M.6 15.500A15 15 0 0 1 15 .8" opacity=".7" />
          <circle cx="14" cy="14" r="1.500" fill="#fff" stroke="none" />
        </svg>
        <svg viewBox="0 0 21 18" className="ml-[12px] h-[18px] w-[21px]" fill="none" stroke="#fff" strokeWidth="1.300">
          <path d="M.7 6.500h3L8 2.500v13l-4.300-4h-3zM10.500 7c1 1 1 3 0 4" />
          <path d="M13.500 4.500c2.500 2.500 2.500 6.500 0 9M16.500 1.500c4 4 4 11 0 15" opacity=".5" />
        </svg>
        <span className="ml-[13px] w-[28px]">ENG</span>
        <div className="ml-[16px] w-[69px] text-center leading-[23px] tracking-[-0.25px]">
          21:48
          <br />
          14.05.2020
        </div>
        <div className="relative ml-[23px] h-[30px] w-[30px]">
          <svg viewBox="0 0 20 20" className="mt-[5px] size-5">
            <path d="M0 0h20v16h-9l-4 3.500V16H0z" fill="#fff" />
            <path d="M4 4.500h12M4 8h12M4 11.500h9" stroke="#222" strokeWidth="1.200" />
          </svg>
          <span className="absolute top-[14px] left-[9px] flex size-[21px] items-center justify-center rounded-full border border-[#777] bg-[#2b2a29] text-[13px] font-bold text-white">2</span>
        </div>
        <div className="mr-[5px] ml-[15px] h-full w-px bg-[#555]" />
      </div>
    </footer>
  )
}

export default function App() {
  return (
    <div className="relative flex h-[1080px] w-[1920px] flex-col overflow-hidden bg-white font-['Open_Sans',sans-serif]">
      <TabStrip />
      <Toolbar />
      <BookmarksBar />
      <SiteHeader />
      <BreadcrumbBar />
      <div className="flex min-h-0 flex-1 overflow-hidden">
        <Sidebar />
        <Submission />
        <PageScrollbar />
      </div>
      <Taskbar />
      <div className="absolute bottom-[50px] left-0 z-20 h-[28px] w-[833px] rounded-tr-[4px] border-t border-r border-[#d6d6d6] bg-white pl-[6px] text-[15px] leading-[26px] tracking-[-0.32px] whitespace-nowrap text-[#757a7e]">
        https://www.coursera.org/learn/tcp-ip-advanced/peer/8flrX/tcp-ip-and-advanced-topics/review/j45uD5X6EeqbABJEeR03aQ
      </div>
      <PenMark />
    </div>
  )
}
